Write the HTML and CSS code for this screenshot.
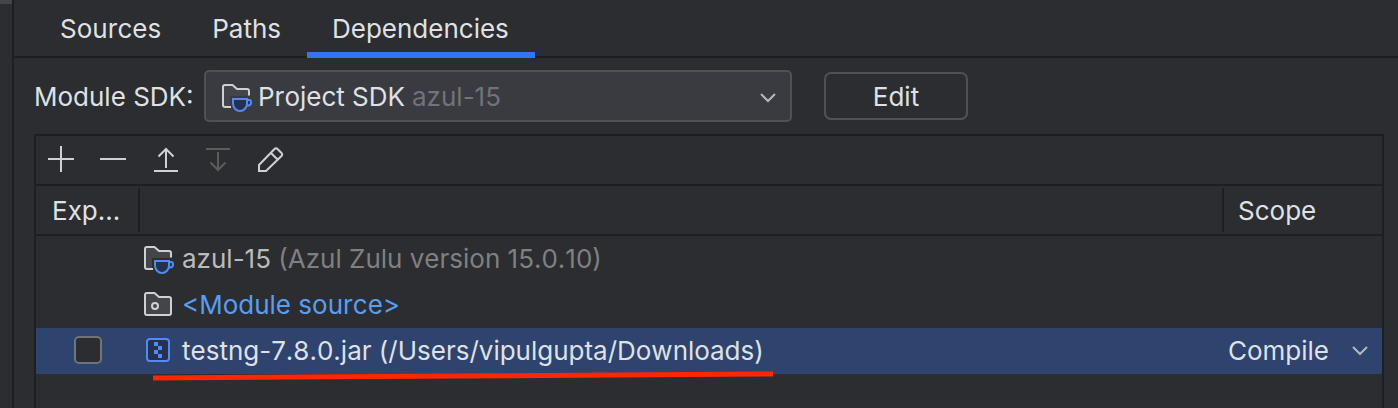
FILE: index.html
```
<!DOCTYPE html>
<html lang="en">
<head>
    <meta charset="utf-8">
    <title>Module Dependencies</title>
    <link rel="stylesheet" href="styles.css">
</head>
<body>

<div class="window">
    <div class="gutter"><div class="gutter-item"></div></div>

    <div class="main">
        <div class="tabs" role="tablist">
            <button class="tab" role="tab">Sources</button>
            <button class="tab" role="tab">Paths</button>
            <button class="tab active" role="tab" aria-selected="true">Dependencies</button>
        </div>

        <div class="sdk-row">
            <label class="sdk-label" for="sdk">Module SDK:</label>
            <div class="combo">
                <select id="sdk" class="combo-select">
                    <option>Project SDK</option>
                </select>
                <div class="combo-icon">
                    <svg class="icon" viewBox="0 0 32 32">
                        <path class="folder-fill" d="M3 4h10l4 4h12v7H10v11H3z"/>
                        <path class="line" d="M11 26H5a2 2 0 0 1-2-2V6a2 2 0 0 1 2-2h7.500L17 8h10a2 2 0 0 1 2 2v4.500"/>
                        <path class="cup" d="M13 18h14v4.500a7 7.500 0 0 1-14 0zM27 19h2a2 2 0 0 1 2 2v1a2.500 2.500 0 0 1-2.500 2.500H27"/>
                    </svg>
                </div>
                <span class="combo-hint">azul-15</span>
                <svg class="arrow combo-arrow" viewBox="0 0 18 12"><path d="M2 2l7 7 7-7"/></svg>
            </div>
            <button class="edit-btn">Edit</button>
        </div>

        <div class="panel">
            <div class="toolbar">
                <button class="tool" aria-label="Add">
                    <svg class="icon" viewBox="0 0 32 32"><path class="line" d="M15 3v26M2 16h26"/></svg>
                </button>
                <button class="tool" aria-label="Remove">
                    <svg class="icon" viewBox="0 0 32 32"><path class="line" d="M2 16h26"/></svg>
                </button>
                <button class="tool" aria-label="Move up">
                    <svg class="icon" viewBox="0 0 32 32"><path class="line" d="M4 28h24M16 25V6M8.500 13.500L16 6l7.500 7.500"/></svg>
                </button>
                <button class="tool" aria-label="Move down" disabled>
                    <svg class="icon" viewBox="0 0 32 32"><path class="line" d="M4 6h24M16 9v18M8.500 19.500L16 27l7.500-7.500"/></svg>
                </button>
                <button class="tool" aria-label="Edit entry">
                    <svg class="icon" viewBox="0 0 32 32"><path class="line" d="M5 28v-6L20.500 6a2 2 0 0 1 3 0l4 4a2 2 0 0 1 0 3L12 28zM17 10l6.500 6.500"/></svg>
                </button>
            </div>

            <table class="deps">
                <colgroup>
                    <col class="col-export">
                    <col>
                    <col class="col-scope">
                </colgroup>
                <thead>
                    <tr>
                        <th><div class="head">Exp...</div></th>
                        <th aria-label="Name"><div class="head"></div></th>
                        <th><div class="head last">Scope</div></th>
                    </tr>
                </thead>
                <tbody>
                    <tr>
                        <td></td>
                        <td>
                            <div class="entry sdk">
                                <svg class="icon" viewBox="0 0 32 32">
                                    <path class="folder-fill" d="M3 4h10l4 4h12v7H10v11H3z"/>
                                    <path class="line" d="M11 26H5a2 2 0 0 1-2-2V6a2 2 0 0 1 2-2h7.500L17 8h10a2 2 0 0 1 2 2v4.500"/>
                                    <path class="cup" d="M13 18h14v4.500a7 7.500 0 0 1-14 0zM27 19h2a2 2 0 0 1 2 2v1a2.500 2.500 0 0 1-2.500 2.500H27"/>
                                </svg>
                                <span>azul-15 <span class="muted">(Azul Zulu version 15.0.10)</span></span>
                            </div>
                        </td>
                        <td></td>
                    </tr>
                    <tr>
                        <td></td>
                        <td>
                            <div class="entry source">
                                <svg class="icon" viewBox="0 0 32 32">
                                    <path class="line filled" d="M5 26a2 2 0 0 1-2-2V6a2 2 0 0 1 2-2h7.500L17 8h10a2 2 0 0 1 2 2v14a2 2 0 0 1-2 2z"/>
                                    <circle class="line" cx="13" cy="17" r="3"/>
                                </svg>
                                <span>&lt;Module source&gt;</span>
                            </div>
                        </td>
                        <td></td>
                    </tr>
                    <tr class="selected">
                        <td class="center"><input type="checkbox" class="check" aria-label="Export testng-7.8.0.jar"></td>
                        <td class="marked">
                            <div class="entry">
                                <svg class="icon" viewBox="0 0 32 32">
                                    <rect class="jar" x="5" y="4" width="22" height="22" rx="3"/>
                                    <path class="zip" d="M12 7h4v4h-4zM16 11h4v4h-4zM12 15h4v4h-4zM16 19h4v4h-4z"/>
                                </svg>
                                <span>testng-7.8.0.jar (/Users/vipulgupta/Downloads)</span>
                            </div>
                            <svg class="underline" viewBox="0 0 620 14"><path d="M0 10L310 8L620 6"/></svg>
                        </td>
                        <td>
                            <div class="scope">
                                <select class="scope-select" aria-label="Scope">
                                    <option>Compile</option>
                                    <option>Test</option>
                                    <option>Runtime</option>
                                    <option>Provided</option>
                                </select>
                                <svg class="arrow scope-arrow" viewBox="0 0 18 12"><path d="M2 2l7 7 7-7"/></svg>
                            </div>
                        </td>
                    </tr>
                </tbody>
            </table>
        </div>
    </div>
</div>

</body>
</html>
```

FILE: styles.css
```
* {
    box-sizing: border-box;
}
body {
    margin: 0;
    background-color: #2b2d30;
    color: #dfe1e5;
    font-family: Inter, "Liberation Sans", sans-serif;
    font-size: 26px;
    line-height: 32px;
    font-kerning: none;
}
button, select {
    font: inherit;
    font-kerning: none;
    color: inherit;
    margin: 0;
}
svg {
    display: block;
    fill: none;
}
.window {
    display: flex;
    min-height: 100vh;
}
.gutter {
    width: 14px;
    border-right: 2px solid #1e1f22;
}
.gutter-item {
    height: 4px;
    background-color: #43454a;
}
.main {
    flex: 1;
    display: flex;
    flex-direction: column;
}

/* tabs */
.tabs {
    display: flex;
    height: 58px;
    padding-left: 21px;
    box-shadow: inset 0 -2px #1e1f22;
}
.tab {
    padding: 6px 26px 0 25px;
    border: none;
    border-bottom: 6px solid transparent;
    background: none;
}
.tab.active {
    border-bottom-color: #3574f0;
}

/* sdk chooser */
.sdk-row {
    display: flex;
    align-items: center;
    padding: 12px 20px;
}
.sdk-label {
    width: 170px;
    padding-top: 2px;
    white-space: nowrap;
}
.combo {
    position: relative;
    width: 588px;
}
.combo-select {
    display: block;
    width: 100%;
    height: 52px;
    padding: 2px 52px 0;
    border: 2px solid #4e5157;
    border-radius: 5px;
    background-color: #393b40;
    appearance: none;
}
.combo-icon, .combo-hint, .combo-arrow {
    position: absolute;
    top: 11px;
    pointer-events: none;
}
.combo-icon {
    left: 16px;
}
.combo-hint {
    left: 208px;
    color: #6f737a;
}
.combo-arrow {
    top: 22px;
    right: 15px;
}
.edit-btn {
    width: 144px;
    height: 48px;
    margin-left: 32px;
    padding: 2px 0 0;
    border: 2px solid #4e5157;
    border-radius: 7px;
    background: none;
}

/* icons */
.icon {
    width: 32px;
    height: 32px;
    flex: none;
}
.line {
    stroke: #ced0d6;
    stroke-width: 2;
}
.folder-fill, .filled {
    fill: #43454a;
}
.cup, .jar {
    fill: #25324d;
    stroke: #548af7;
    stroke-width: 2;
}
.zip {
    fill: #548af7;
}
.arrow {
    width: 18px;
    height: 12px;
    stroke: #b4b8bf;
    stroke-width: 2;
}

/* dependencies panel */
.panel {
    flex: 1;
    margin: 0 14px 0 20px;
    border: 2px solid #1e1f22;
    border-bottom: none;
}
.toolbar {
    display: flex;
    height: 50px;
    border-bottom: 2px solid #1e1f22;
}
.tool {
    display: flex;
    align-items: center;
    justify-content: center;
    width: 52px;
    padding: 0 0 2px;
    border: none;
    background: none;
}
.tool:disabled .line {
    stroke: #5a5d5b;
}
.deps {
    width: 100%;
    table-layout: fixed;
    border-collapse: collapse;
}
.col-export {
    width: 104px;
}
.col-scope {
    width: 158px;
}
.deps th {
    height: 50px;
    padding: 2px 0 4px;
    box-shadow: inset 0 -2px #1e1f22;
    font-weight: normal;
    text-align: left;
}
.head {
    height: 44px;
    padding: 7px 0 0 16px;
    border-right: 2px solid #1e1f22;
}
.head.last {
    padding-left: 14px;
    border-right: none;
}
.deps td {
    height: 46px;
    padding: 0;
}
.entry {
    display: flex;
    align-items: center;
    gap: 8px;
    padding-left: 2px;
}
.sdk {
    color: #bbbbbb;
}
.muted {
    color: #808080;
}
.source {
    color: #589df6;
}
.selected {
    background-color: #2e436e;
}
.deps .center {
    padding-bottom: 2px;
}
.check {
    display: block;
    width: 28px;
    height: 28px;
    margin: 0 auto;
    border: 2px solid #6f737a;
    border-radius: 5px;
    background-color: #2b2d30;
    appearance: none;
}
.marked {
    position: relative;
}
.underline {
    position: absolute;
    left: 13px;
    top: 40px;
    width: 620px;
    height: 14px;
    stroke: #ff2600;
    stroke-width: 5;
}
.scope {
    position: relative;
}
.scope-select {
    display: block;
    width: 100%;
    height: 46px;
    padding: 0 4px;
    border: none;
    background: none;
    appearance: none;
}
.scope-arrow {
    position: absolute;
    top: 17px;
    right: 13px;
    pointer-events: none;
}
```
